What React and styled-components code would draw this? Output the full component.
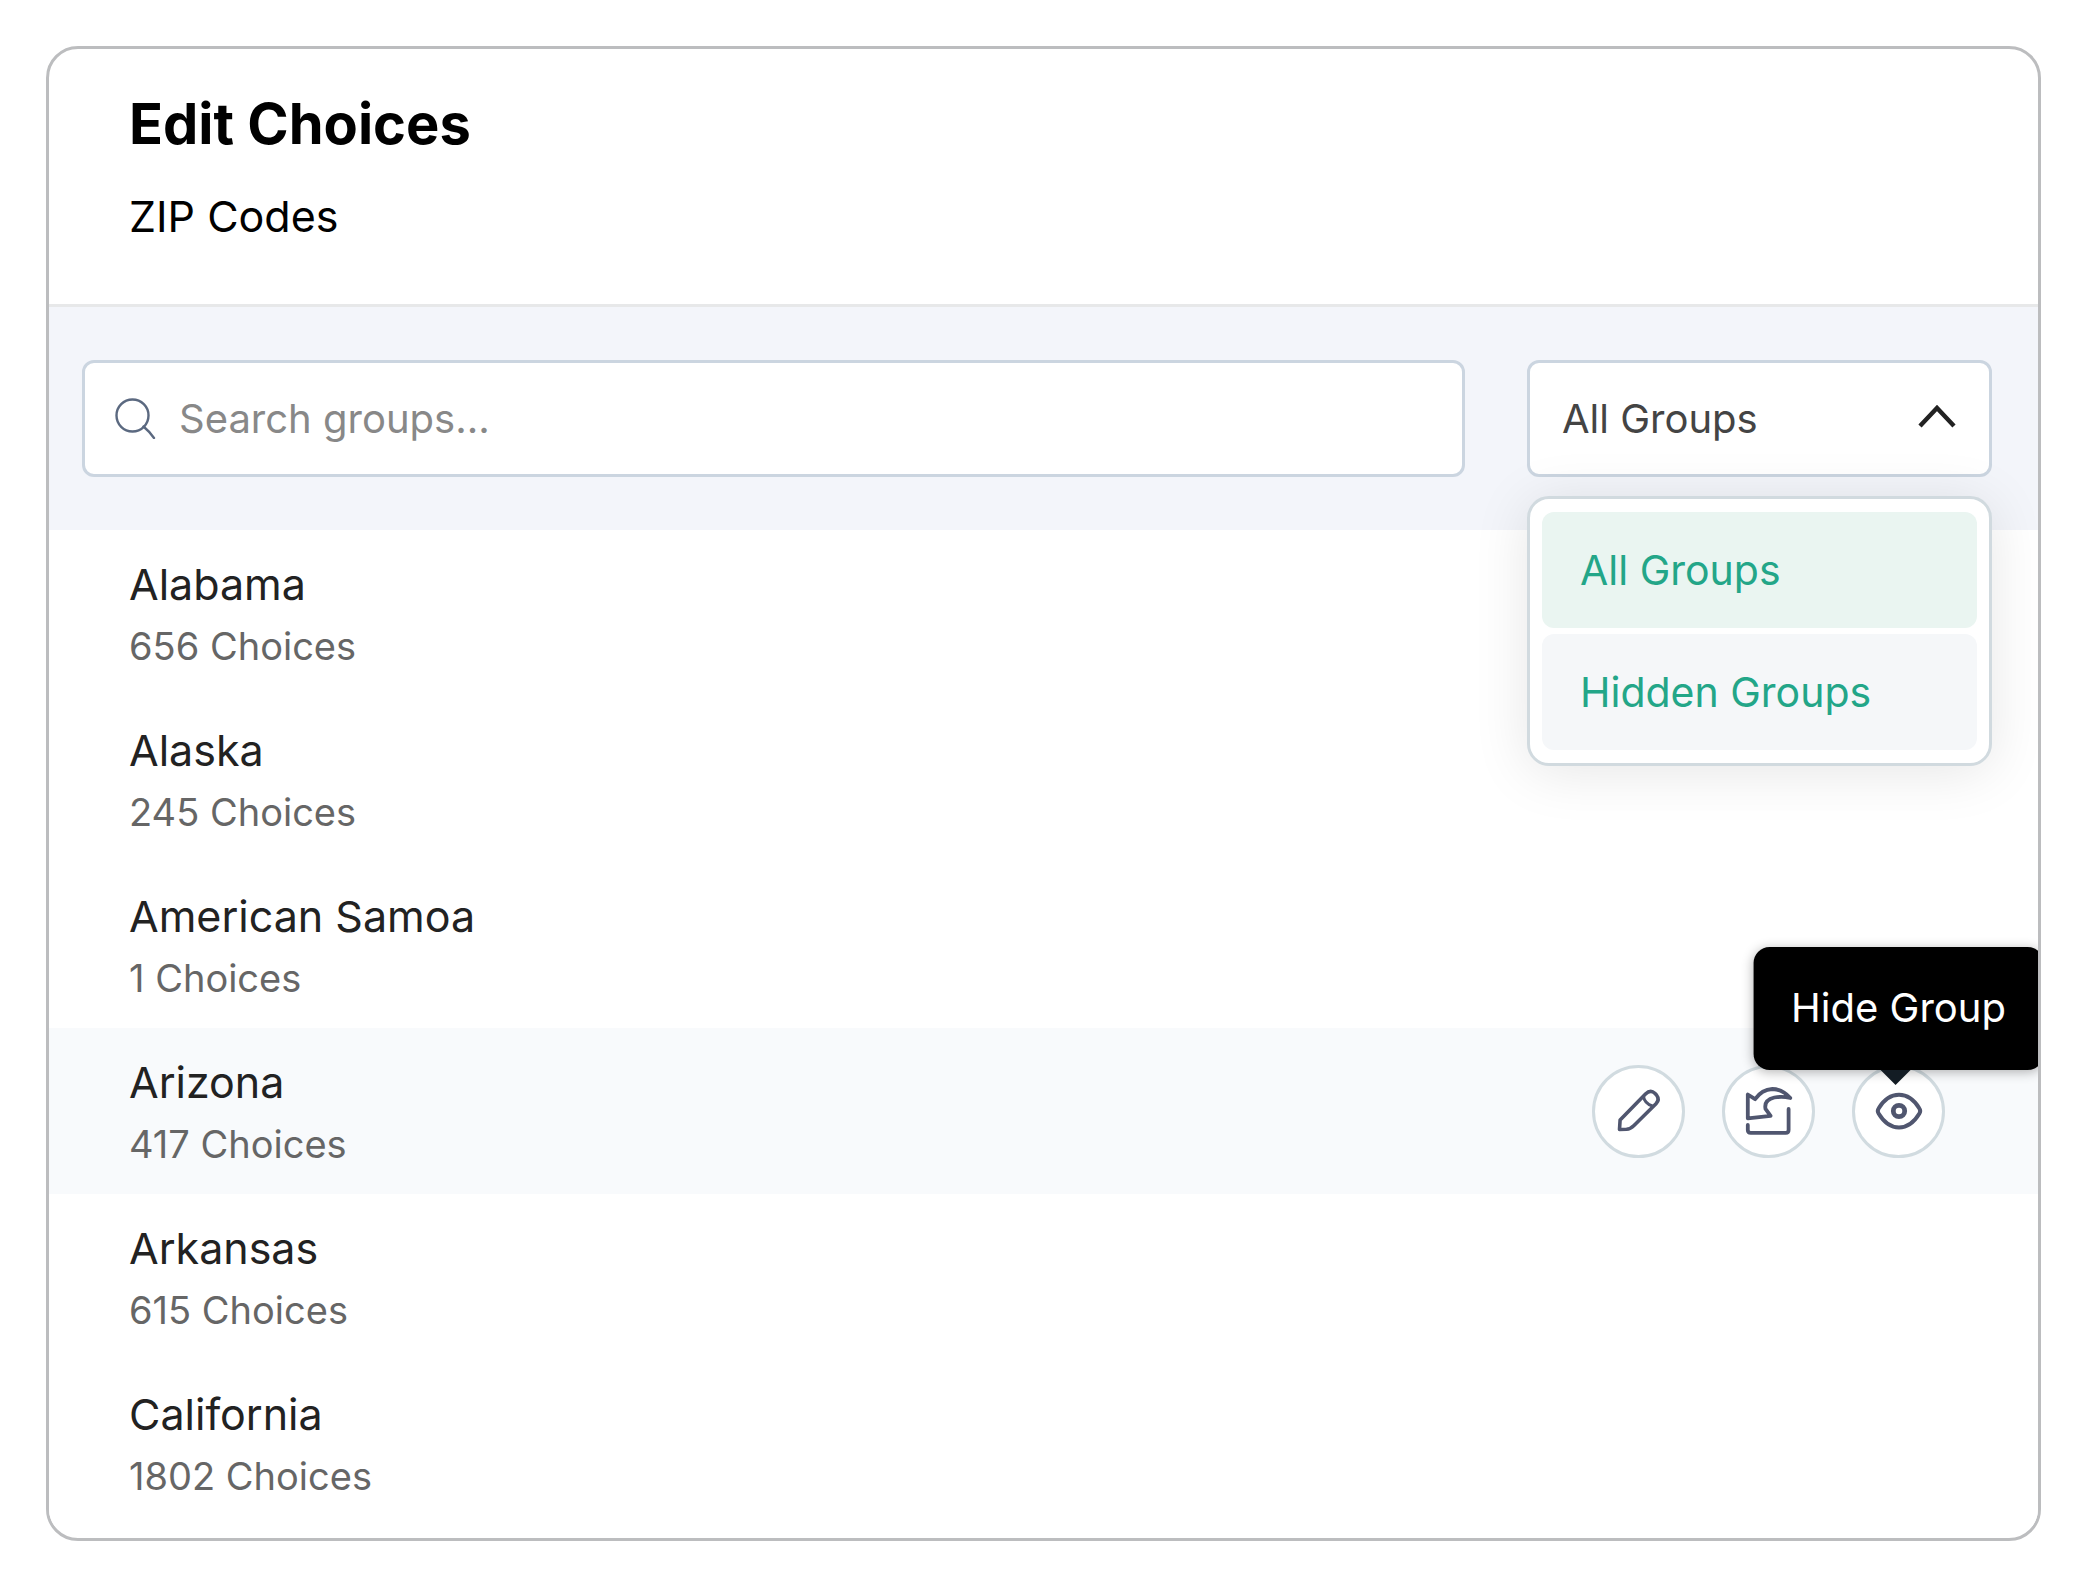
import React, { useState } from "react";
import styled, { createGlobalStyle } from "styled-components";

const GlobalStyle = createGlobalStyle`
  *, *::before, *::after {
    box-sizing: border-box;
  }
  body {
    margin: 0;
    background: #ffffff;
    font-family: Inter, "Liberation Sans", sans-serif;
  }
  button, input, select {
    font-family: inherit;
  }
`;

const Page = styled.main`
  padding: 46px 41px 46px 46px;
`;

const Card = styled.section`
  border: 3px solid #bcbdbf;
  border-radius: 32px;
  background: #ffffff;
  overflow: hidden;
`;

const Header = styled.header`
  display: flex;
  flex-direction: column;
  gap: 28px;
  padding: 39px 80px 60px;
  border-bottom: 3px solid #e7e8e9;
`;

const Title = styled.h1`
  margin: 0;
  font-size: 56px;
  line-height: 72px;
  font-weight: 700;
  color: #000000;
`;

const Subtitle = styled.p`
  margin: 0;
  font-size: 43px;
  line-height: 56px;
  color: #000000;
`;

const Toolbar = styled.div`
  display: flex;
  gap: 62px;
  padding: 53px 46px 53px 33px;
  background: #f3f5fa;
`;

const SearchField = styled.label`
  flex: 1;
  display: flex;
  align-items: center;
  gap: 23px;
  height: 117px;
  padding: 0 30px;
  border: 3px solid #cbd5e0;
  border-radius: 12px;
  background: #ffffff;
`;

const SearchInput = styled.input`
  flex: 1;
  min-width: 0;
  padding: 0;
  border: none;
  outline: none;
  background: transparent;
  font-size: 40px;
  line-height: 52px;
  color: #444444;
  &::placeholder {
    color: #888888;
    opacity: 1;
  }
`;

const Filter = styled.div`
  position: relative;
  width: 465px;
`;

const FilterSelect = styled.select`
  appearance: none;
  width: 100%;
  height: 117px;
  padding: 0 80px 0 32px;
  border: 3px solid #cbd5e0;
  border-radius: 12px;
  outline: none;
  background: #ffffff;
  font-size: 40px;
  color: #444444;
`;

const Chevron = styled.svg`
  position: absolute;
  top: 44px;
  right: 36px;
  pointer-events: none;
`;

const Menu = styled.div`
  position: absolute;
  top: 136px;
  left: 0;
  right: 0;
  z-index: 2;
  display: flex;
  flex-direction: column;
  gap: 6px;
  padding: 13px 12px;
  border: 3px solid #d1dadf;
  border-radius: 22px;
  background: #ffffff;
  box-shadow: 0 6px 56px rgba(0, 0, 0, 0.1);
`;

const MenuItem = styled.button`
  height: 116px;
  padding: 0 38px;
  border: none;
  border-radius: 12px;
  background: ${({ $selected }) => ($selected ? "#eaf5f1" : "#f5f7f9")};
  font-size: 41px;
  text-align: left;
  color: #23a688;
  cursor: pointer;
`;

const GroupList = styled.ul`
  margin: 0;
  padding: 0 0 12px;
  list-style: none;
`;

const GroupRow = styled.li`
  display: flex;
  align-items: center;
  justify-content: space-between;
  padding: 28px 93px 28px 80px;
  background: ${({ $active }) => ($active ? "#f8fafc" : "#ffffff")};
`;

const GroupText = styled.div`
  display: flex;
  flex-direction: column;
  gap: 14px;
`;

const GroupName = styled.span`
  font-size: 43px;
  line-height: 52px;
  color: #222222;
`;

const GroupCount = styled.span`
  font-size: 38px;
  line-height: 44px;
  color: #666666;
`;

const Actions = styled.div`
  display: flex;
  gap: 37px;
`;

const ActionSlot = styled.div`
  position: relative;
  height: 93px;
`;

const ActionButton = styled.button`
  display: flex;
  align-items: center;
  justify-content: center;
  width: 93px;
  height: 93px;
  padding: 0;
  border: 3px solid #d1dbe0;
  border-radius: 50%;
  background: #ffffff;
  color: #50566f;
  cursor: pointer;
  svg {
    overflow: visible;
  }
`;

const Tooltip = styled.div`
  position: absolute;
  bottom: 88px;
  left: 50%;
  transform: translateX(-50%);
  z-index: 1;
  padding: 35px 38px 36px;
  border-radius: 16px;
  background: #000000;
  box-shadow: 0 2px 12px rgba(0, 0, 0, 0.3);
  font-size: 40px;
  line-height: 52px;
  white-space: nowrap;
  color: #ffffff;
  &::after {
    content: "";
    position: absolute;
    top: 100%;
    left: 50%;
    margin-left: -18px;
    border: 15px solid transparent;
    border-top-color: #131c24;
    border-bottom: none;
  }
`;

const SearchIcon = () => (
  <svg width="41" height="41" viewBox="0 0 41 41" fill="none" stroke="#5b6980" strokeWidth="2.4" strokeLinecap="round">
    <circle cx="17.5" cy="17.5" r="16" />
    <path d="M28.5 28.5Q34 33 39 40" />
  </svg>
);

const PencilIcon = () => (
  <svg width="46" height="46" viewBox="0 0 46 46" fill="none" stroke="currentColor" strokeWidth="3.6" strokeLinejoin="round">
    <path d="M3.5 41.5L4.1 32L29.5 6Q34.5 1 38.8 5.2L40.5 7Q44 11.5 40 15.8L18 37.5Q14.5 41 10.5 41.3Z" />
    <path d="M27.5 8.5Q28.5 15.5 36.5 18" strokeWidth="3" />
  </svg>
);

const RevertIcon = () => (
  <svg width="46" height="46" viewBox="0 0 46 46" fill="none" stroke="currentColor" strokeWidth="3.8" strokeLinejoin="round" strokeLinecap="round">
    <path d="M1.8 6.5V30.3L24.6 27.8L19.5 20.8Q17.8 12 28.3 9.5Q36.5 8 44.3 10Q36 1 26.3 1Q15.8 1.5 9.1 11.2Z" />
    <path d="M1.8 37V42Q1.8 44.8 4.8 44.8H39.8Q42.6 44.8 42.6 42V21" />
  </svg>
);

const EyeIcon = () => (
  <svg width="46" height="46" viewBox="0 0 46 46" fill="none" stroke="currentColor" strokeWidth="4">
    <path d="M2.6 20.5C8 11.5 15 6.8 23 6.8S38 11.5 43.4 20.5Q45 23 43.4 25.5C38 34.5 31 39.4 23 39.4S8 34.5 2.6 25.5Q1 23 2.6 20.5Z" />
    <circle cx="23" cy="23" r="5.7" strokeWidth="4.8" />
  </svg>
);

const filters = ["All Groups", "Hidden Groups"];

const groups = [
  { name: "Alabama", count: 656 },
  { name: "Alaska", count: 245 },
  { name: "American Samoa", count: 1 },
  { name: "Arizona", count: 417 },
  { name: "Arkansas", count: 615 },
  { name: "California", count: 1802 },
];

const App = () => {
  const [search, setSearch] = useState("");
  const [filter, setFilter] = useState("All Groups");
  const activeGroup = "Arizona";

  return (
    <Page>
      <GlobalStyle />
      <Card>
        <Header>
          <Title>Edit Choices</Title>
          <Subtitle>ZIP Codes</Subtitle>
        </Header>
        <Toolbar>
          <SearchField htmlFor="group-search">
            <SearchIcon />
            <SearchInput
              id="group-search"
              aria-label="Search groups"
              placeholder="Search groups..."
              value={search}
              onChange={(e) => setSearch(e.target.value)}
            />
          </SearchField>
          <Filter>
            <FilterSelect
              aria-label="Filter groups"
              value={filter}
              onChange={(e) => setFilter(e.target.value)}
            >
              {filters.map((name) => (
                <option key={name}>{name}</option>
              ))}
            </FilterSelect>
            <Chevron width="38" height="26" viewBox="0 0 38 26" fill="none" stroke="#222222" strokeWidth="4.4">
              <path d="M2 22L19 4L36 22" />
            </Chevron>
            <Menu>
              {filters.map((name) => (
                <MenuItem
                  key={name}
                  type="button"
                  $selected={name === filter}
                  onClick={() => setFilter(name)}
                >
                  {name}
                </MenuItem>
              ))}
            </Menu>
          </Filter>
        </Toolbar>
        <GroupList>
          {groups.map(({ name, count }) => (
            <GroupRow key={name} $active={name === activeGroup}>
              <GroupText>
                <GroupName>{name}</GroupName>
                <GroupCount>{count} Choices</GroupCount>
              </GroupText>
              {name === activeGroup && (
                <Actions>
                  <ActionSlot>
                    <ActionButton type="button" aria-label="Edit Group">
                      <PencilIcon />
                    </ActionButton>
                  </ActionSlot>
                  <ActionSlot>
                    <ActionButton type="button" aria-label="Revert Group">
                      <RevertIcon />
                    </ActionButton>
                  </ActionSlot>
                  <ActionSlot>
                    <ActionButton type="button" aria-label="Hide Group">
                      <EyeIcon />
                    </ActionButton>
                    <Tooltip role="tooltip">Hide Group</Tooltip>
                  </ActionSlot>
                </Actions>
              )}
            </GroupRow>
          ))}
        </GroupList>
      </Card>
    </Page>
  );
};

export default App;
